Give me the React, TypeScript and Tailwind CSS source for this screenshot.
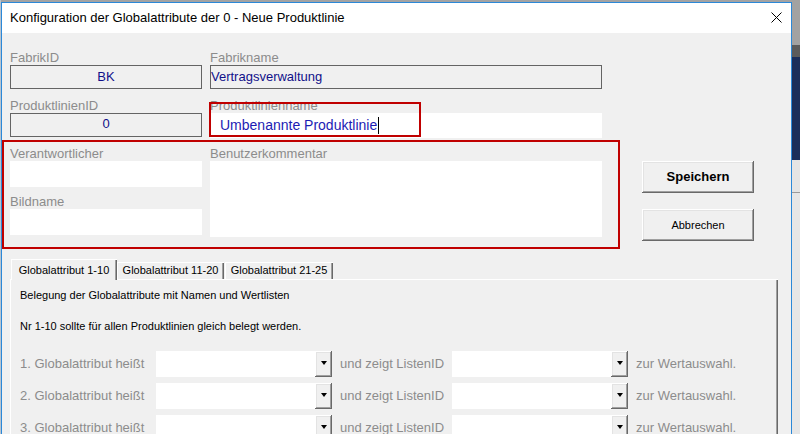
import React from "react";

// Classic Win32 dialog: "Konfiguration der Globalattribute"

const raised =
  "shadow-[inset_-1px_-1px_#696969,inset_1px_1px_#ffffff,inset_-2px_-2px_#a0a0a0,inset_2px_2px_#e3e3e3]";

function Label({ children }: { children: React.ReactNode }) {
  return <div className="h-[15px] text-[13px] leading-[15px] text-[#8c8c8c] whitespace-nowrap">{children}</div>;
}

function Combo() {
  return (
    <div className="flex h-[26px]">
      <div className="w-[159px] bg-white" />
      <div className={`flex w-[17px] justify-center bg-[#f0f0f0] pt-[10px] ${raised}`}>
        <div className="h-0 w-0 border-x-[3.5px] border-t-[4px] border-x-transparent border-t-black" />
      </div>
    </div>
  );
}

function AttrRow({ n }: { n: number }) {
  return (
    <div className="flex h-[26px] items-center text-[13px] text-[#8c8c8c] whitespace-nowrap">
      <div className="w-[136px]">{n}. Globalattribut heißt</div>
      <Combo />
      <div className="w-[120px] pl-[8px]">und zeigt ListenID</div>
      <Combo />
      <div className="pl-[8px]">zur Wertauswahl.</div>
    </div>
  );
}

export default function App() {
  return (
    <div className="flex h-[434px] w-[800px] overflow-hidden bg-[#a3a3a3] font-['Liberation_Sans',Arial,sans-serif]">
      <div className="w-px bg-[#b8c4d0]" />

      {/* dialog window */}
      <div className="relative mt-[2px] flex w-[791px] flex-col border-x border-t border-[#2b88d8] bg-[#f0f0f0]">
        <div className="flex h-[30px] shrink-0 items-center justify-between bg-white pl-[8px] pr-[9px]">
          <span className="text-[13px] text-black">Konfiguration der Globalattribute der 0 - Neue Produktlinie</span>
          <svg width="11" height="11" viewBox="0 0 11 11" className="mt-[-1px]">
            <path d="M0.5 0.5 L10.5 10.5 M10.5 0.5 L0.5 10.5" stroke="#000" strokeWidth="1" />
          </svg>
        </div>

        <div className="flex flex-col pl-[8px] pt-[17px]">
          {/* Fabrik / Produktlinie */}
          <div className="flex gap-[8px]">
            <div className="flex w-[192px] flex-col">
              <Label>FabrikID</Label>
              <div className="flex h-[24px] items-center justify-center border border-[#646464] text-[13px] text-[#10108a]">BK</div>
              <div className="mt-[9px]">
                <Label>ProduktlinienID</Label>
              </div>
              <div className="flex h-[24px] items-center justify-center border border-[#646464] pb-[3px] text-[13px] text-[#10108a]">0</div>
            </div>
            <div className="flex w-[392px] flex-col">
              <Label>Fabrikname</Label>
              <div className="flex h-[24px] items-center border border-[#646464] text-[13px] text-[#10108a]">Vertragsverwaltung</div>
              <div className="mt-[9px]">
                <Label>Produktlinienname</Label>
              </div>
              <div className="flex h-[25px] items-center bg-white pl-[10px] text-[14px] text-[#1c1cb4]">
                Umbenannte Produktlinie
                <span className="ml-px h-[17px] w-px bg-black" />
              </div>
            </div>
          </div>

          {/* Verantwortlicher / Kommentar / Buttons */}
          <div className="mt-[8px] flex gap-[8px]">
            <div className="flex w-[192px] flex-col">
              <Label>Verantwortlicher</Label>
              <div className="h-[26px] bg-white" />
              <div className="mt-[7px]">
                <Label>Bildname</Label>
              </div>
              <div className="h-[26px] bg-white" />
            </div>
            <div className="flex w-[392px] flex-col">
              <Label>Benutzerkommentar</Label>
              <div className="h-[76px] bg-white" />
            </div>
            <div className="ml-[32px] flex w-[112px] flex-col pt-[15px]">
              <button className={`h-[32px] bg-[#f0f0f0] text-[13px] font-bold text-black ${raised}`}>Speichern</button>
              <button className={`mt-[16px] h-[32px] bg-[#f0f0f0] text-[11px] text-black ${raised}`}>Abbrechen</button>
            </div>
          </div>

          {/* Tabs */}
          <div className="relative z-10 mt-[18px] ml-px flex h-[20px] items-end text-[11px] text-black whitespace-nowrap">
            <div className="mb-[-1px] flex h-[21px] w-[106px] justify-center bg-[#f0f0f0] pt-[3px] shadow-[inset_1px_1px_#ffffff,inset_-1px_0_#696969,inset_-2px_0_#a0a0a0]">
              Globalattribut 1-10
            </div>
            <div className="flex h-[17px] w-[107px] items-center justify-center shadow-[inset_1px_1px_#ffffff,inset_-1px_0_#696969,inset_-2px_0_#a0a0a0]">
              Globalattribut 11-20
            </div>
            <div className="ml-px flex h-[17px] w-[108px] items-center justify-center shadow-[inset_1px_1px_#ffffff,inset_-1px_0_#696969,inset_-2px_0_#a0a0a0]">
              Globalattribut 21-25
            </div>
          </div>
          <div className="h-[200px] w-[768px] pl-[10px] pt-[9px] shadow-[inset_1px_1px_#ffffff,inset_-1px_0_#696969,inset_-2px_0_#a0a0a0]">
            <p className="text-[11px] leading-[14px] text-black">Belegung der Globalattribute mit Namen und Wertlisten</p>
            <p className="mt-[17px] text-[11px] leading-[14px] text-black">Nr 1-10 sollte für allen Produktlinien gleich belegt werden.</p>
            <div className="mt-[18px] flex flex-col gap-[6px]">
              <AttrRow n={1} />
              <AttrRow n={2} />
              <AttrRow n={3} />
            </div>
          </div>
        </div>

        {/* red highlight annotations */}
        <div className="pointer-events-none absolute left-[207px] top-[99px] h-[35px] w-[212px] border-2 border-[#c00000]" />
        <div className="pointer-events-none absolute left-0 top-[137px] h-[109px] w-[618px] border-2 border-[#c00000]" />
      </div>

      {/* desktop behind the dialog */}
      <div className="flex w-[8px] flex-col">
        <div className="h-[45px] bg-[#a2a2a2]" />
        <div className="h-[12px] bg-[#5b5b5b]" />
        <div className="h-[103px] bg-[#1b2e5a]" />
        <div className="h-[32px] bg-[#e4e4e4]" />
        <div className="h-px bg-[#9a9a9a]" />
        <div className="flex-1 bg-[#e6e6e6]" />
      </div>
    </div>
  );
}
